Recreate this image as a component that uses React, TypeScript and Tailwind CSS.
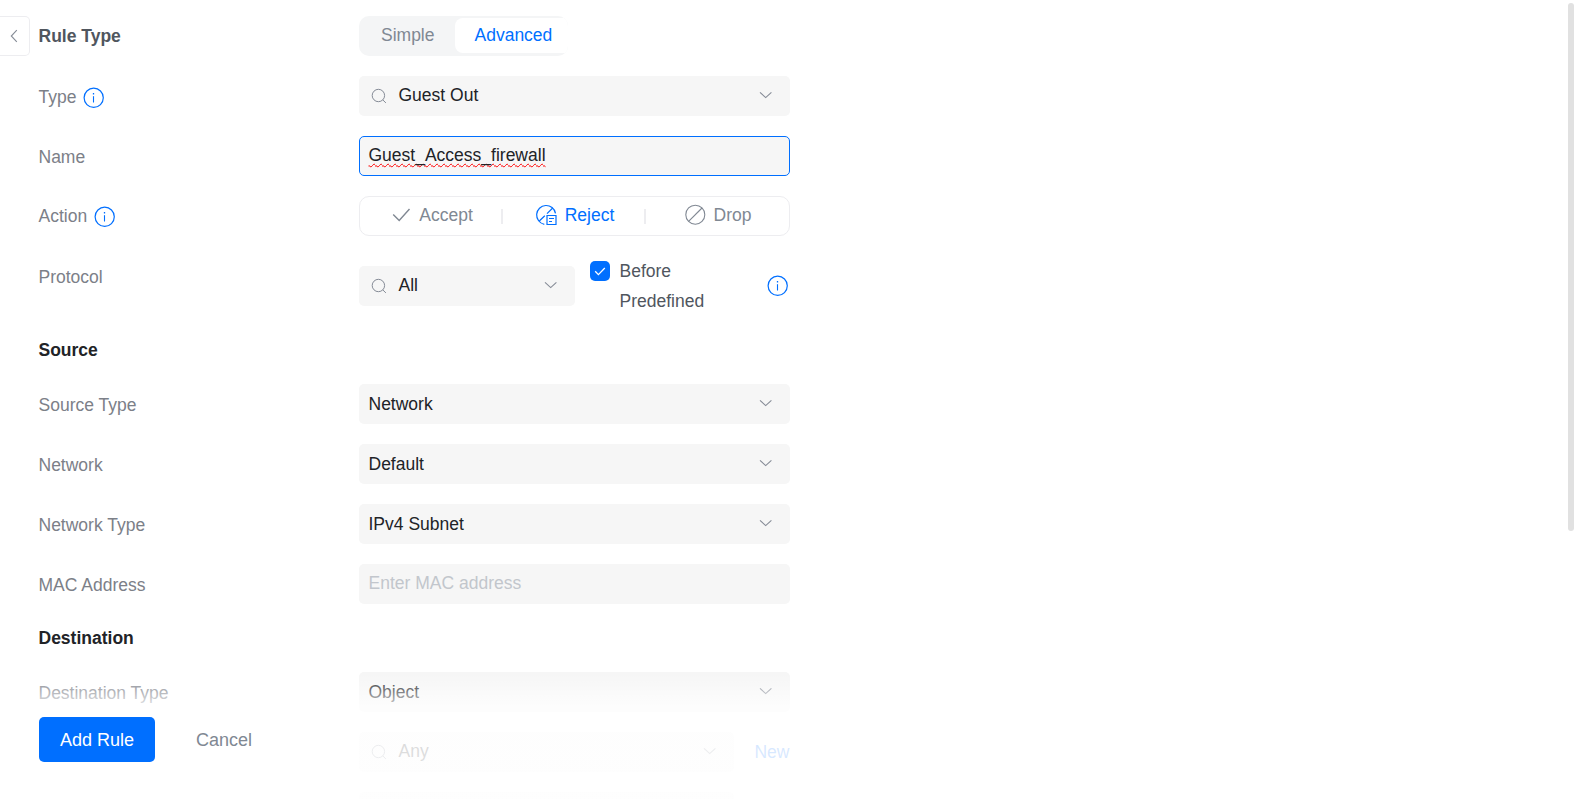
import type { ReactNode } from "react";

function InfoIcon() {
  return (
    <svg className="size-[22px] shrink-0 text-[#006fff]" viewBox="0 0 22 22" fill="none" stroke="currentColor">
      <circle cx="10.7" cy="10.800" r="9.6" strokeWidth="1.2" />
      <path d="M10.500 9.200v6.300" strokeWidth="1.1" />
      <path d="M10.500 6v1.500" strokeWidth="1.3" />
    </svg>
  );
}

function SearchIcon() {
  return (
    <svg className="size-[18px] shrink-0 text-[#858b96]" viewBox="0 0 18 18" fill="none" stroke="currentColor" strokeWidth="1">
      <circle cx="8.4" cy="8.500" r="6.200" />
      <path d="M12.800 12.900l3.100 3" />
    </svg>
  );
}

function Chevron() {
  return (
    <svg className="size-[14px] shrink-0 -translate-y-px text-[#858b96]" viewBox="0 0 14 14" fill="none" stroke="currentColor" strokeWidth="1.1">
      <path d="M1 4.300l5.700 5.300 5.700-5.300" />
    </svg>
  );
}

function CheckIcon() {
  return (
    <svg className="size-5 shrink-0" viewBox="0 0 20 20" fill="none" stroke="currentColor" strokeWidth="1.4">
      <path d="M2.200 9.500l6 6L18.500 4" />
    </svg>
  );
}

function RejectIcon() {
  return (
    <svg className="size-[22px] shrink-0" viewBox="0 0 22 22" fill="none" stroke="currentColor" strokeWidth="1.2">
      <path d="M9.300 20.300A9.500 9.500 0 1 1 20.500 9.300" />
      <path d="M4.300 17l5.500-5.300M12 9.600L17.700 4" />
      <path d="M12 11.500h9v9h-9z" />
      <path d="M14 14.500h5M14 17.500h3" />
    </svg>
  );
}

function DropIcon() {
  return (
    <svg className="size-[22px] shrink-0" viewBox="0 0 22 22" fill="none" stroke="currentColor" strokeWidth="1.1">
      <circle cx="11.300" cy="10.700" r="9.500" />
      <path d="M4.600 17.400L18 4" />
    </svg>
  );
}

function Row({ label, info, labelClass = "pt-[2px]", children }: { label: string; info?: boolean; labelClass?: string; children: ReactNode }) {
  return (
    <div className="grid shrink-0 grid-cols-[320px_431px]">
      <div className={`flex h-10 items-center gap-[7px] text-[#7c8088] ${labelClass}`}>
        <span>{label}</span>
        {info && (
          <span className="mt-[3px]">
            <InfoIcon />
          </span>
        )}
      </div>
      {children}
    </div>
  );
}

function Select({ value, search, className = "" }: { value: string; search?: boolean; className?: string }) {
  return (
    <div className={`flex h-10 items-center rounded-[5px] bg-[#f6f6f6] pr-[17px] text-[#212327] ${search ? "pl-[11px]" : "pl-[9.500px]"} ${className}`}>
      {search && (
        <span className="mr-[10.500px]">
          <SearchIcon />
        </span>
      )}
      <span className={search ? "flex-1 pb-[2px]" : "flex-1"}>{value}</span>
      <Chevron />
    </div>
  );
}

export default function App() {
  return (
    <div className="relative flex h-[799px] w-[1574px] overflow-hidden bg-white font-['Liberation_Sans',Arial,sans-serif] text-[17.500px] leading-[26px]">
      <button className="mt-4 flex h-10 w-[30px] shrink-0 items-center justify-center rounded-r-[5px] border border-l-0 border-[#ededf0] pr-[2px] text-[#858b96]">
        <svg className="size-[14px]" viewBox="0 0 14 14" fill="none" stroke="currentColor" strokeWidth="1.1">
          <path d="M9.800 1.200L4.300 7l5.500 5.800" />
        </svg>
      </button>

      <main className="ml-[9px] flex w-[751px] flex-col gap-5 pt-4">
        <div className="grid shrink-0 grid-cols-[320px_209px]">
          <div className="-ml-[0.500px] flex h-10 items-center font-bold text-[#50565e]">Rule Type</div>
          <div className="flex h-10 overflow-hidden rounded-[10px] bg-[#f4f5f6] pt-[2px] pb-[3px]">
            <div className="w-[96px] pt-[4px] pl-[22px] text-[#808893]">Simple</div>
            <div className="w-[113px] rounded-l-[8px] bg-white pt-[4px] pl-[19.500px] text-[#006fff]">Advanced</div>
          </div>
        </div>
        <Row label="Type" info labelClass="-ml-[0.500px] pt-[1px]">
          <Select value="Guest Out" search />
        </Row>
        <Row label="Name" labelClass="-ml-[0.500px] pt-[1px]">
          <div className="flex h-10 items-center rounded-[5px] border border-[#006fff] bg-[#f6f6f6] pb-[2px] pl-[8.500px] text-[#212327]">
            <span className="underline decoration-[#ff0000] decoration-wavy decoration-[1.400px] underline-offset-[2px] [text-decoration-skip-ink:none]">Guest_Access_firewall</span>
          </div>
        </Row>
        <Row label="Action" info labelClass="-ml-[0.500px] pb-[1px]">
          <div className="flex h-10 items-center rounded-[10px] border border-[#ededf0] text-[#808893]">
            <div className="flex w-[141px] items-center justify-center gap-2 pb-[2px] pl-[3px]">
              <CheckIcon />
              <span>Accept</span>
            </div>
            <div className="h-[15px] w-[2px] bg-[#ededf0]" />
            <div className="flex w-[141px] items-center justify-center gap-2 pb-[2px] pl-[2px] text-[#006fff]">
              <RejectIcon />
              <span>Reject</span>
            </div>
            <div className="h-[15px] w-[2px] bg-[#ededf0]" />
            <div className="flex flex-1 items-center justify-center gap-2 pb-[2px]">
              <DropIcon />
              <span>Drop</span>
            </div>
          </div>
        </Row>
        <Row label="Protocol" labelClass="-ml-[0.500px] pt-[1px]">
          <div className="flex h-[60px] items-center">
            <Select value="All" search className="w-[216px]" />
            <div className="ml-[15px] flex h-[60px] w-[177px] gap-[9.500px]">
              <span className="mt-[5px] flex size-5 items-center justify-center rounded-[5px] bg-[#006fff] text-white">
                <svg className="size-3" viewBox="0 0 12 12" fill="none" stroke="currentColor" strokeWidth="1.300">
                  <path d="M1.200 6.200l3.200 3.400L10.800 3" />
                </svg>
              </span>
              <span className="w-[100px] leading-[30px] text-[#50565e]">Before Predefined</span>
            </div>
            <InfoIcon />
          </div>
        </Row>
        <h2 className="mt-[1px] -ml-[0.500px] flex h-[27px] shrink-0 items-center pb-[2px] font-bold text-[#212327]">Source</h2>
        <Row label="Source Type" labelClass="-ml-[0.500px] pt-[1px]">
          <Select value="Network" />
        </Row>
        <Row label="Network" labelClass="-ml-[0.500px] pt-[1px]">
          <Select value="Default" />
        </Row>
        <Row label="Network Type" labelClass="-ml-[0.500px] pt-[1px]">
          <Select value="IPv4 Subnet" />
        </Row>
        <Row label="MAC Address" labelClass="-ml-[0.500px] pt-[1px]">
          <div className="flex h-10 items-center rounded-[5px] bg-[#f6f6f6] pb-[2px] pl-[9.500px] text-[#c2c6cc]">Enter MAC address</div>
        </Row>
        <h2 className="-ml-[0.500px] flex h-7 shrink-0 items-center font-bold text-[#212327]">Destination</h2>
        <Row label="Destination Type" labelClass="-ml-[0.500px] pt-[1px]">
          <Select value="Object" />
        </Row>
        <Row label="">
          <div className="flex h-10 items-center justify-between">
            <Select value="Any" search className="w-[375px]" />
            <span className="pr-[0.500px] text-[#006fff]">New</span>
          </div>
        </Row>
        <Row label="">
          <Select value="" className="w-[375px]" />
        </Row>
      </main>

      <footer className="absolute inset-x-0 bottom-0 flex h-[129px] items-start bg-linear-to-b from-white/0 from-[4px] via-white/82 via-[38px] to-white/87 to-100% pt-[47px] pl-[39px]">
        <button className="h-[45px] w-[116px] rounded-[5px] bg-[#006fff] text-[18px] text-white">Add Rule</button>
        <button className="ml-[41px] h-[45px] text-[18px] text-[#808893]">Cancel</button>
      </footer>

      <div className="absolute top-[3px] right-0 h-[528px] w-[6px] rounded-[3px] bg-[#e1e1e1]" />
    </div>
  );
}
